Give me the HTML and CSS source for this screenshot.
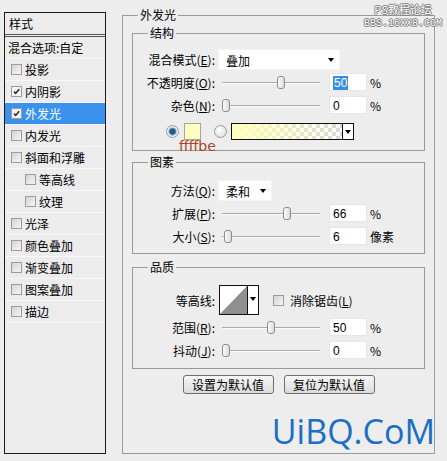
FILE: index.html
```html
<!DOCTYPE html>
<html lang="zh-CN">
<head>
    <meta charset="UTF-8">
    <meta name="viewport" content="width=device-width, initial-scale=1.0">
    <title>外发光</title>
    <link rel="stylesheet" href="styles.css">
</head>
<body>
    <div class="dialog">
        <div class="styles">
            <div class="styles-head">样式</div>
            <div class="style-item plain">混合选项:自定</div>
            <div class="style-item"><span class="cb"></span>投影</div>
            <div class="style-item"><span class="cb on"><svg viewBox="0 0 11 11"><path d="M2.5 5.5 L4.5 7.8 L8.8 2.8" /></svg></span>内阴影</div>
            <div class="style-item active"><span class="cb on"><svg viewBox="0 0 11 11"><path d="M2.5 5.5 L4.5 7.8 L8.8 2.8" /></svg></span>外发光</div>
            <div class="style-item"><span class="cb"></span>内发光</div>
            <div class="style-item"><span class="cb"></span>斜面和浮雕</div>
            <div class="style-item sub"><span class="cb"></span>等高线</div>
            <div class="style-item sub"><span class="cb"></span>纹理</div>
            <div class="style-item"><span class="cb"></span>光泽</div>
            <div class="style-item"><span class="cb"></span>颜色叠加</div>
            <div class="style-item"><span class="cb"></span>渐变叠加</div>
            <div class="style-item"><span class="cb"></span>图案叠加</div>
            <div class="style-item"><span class="cb"></span>描边</div>
        </div>

        <fieldset class="panel">
            <legend>外发光</legend>

            <fieldset class="group g-struct">
                <legend>结构</legend>
                <div class="row">
                    <label class="lbl">混合模式(<u>E</u>):</label>
                    <div class="select s-blend">叠加<span class="arrow"></span></div>
                </div>
                <div class="row slider-row first">
                    <label class="lbl">不透明度(<u>O</u>):</label>
                    <div class="track"><span class="thumb" style="--v: .61"></span></div>
                    <span class="num"><span class="sel">50</span></span>
                    <span class="unit">%</span>
                </div>
                <div class="row slider-row">
                    <label class="lbl">杂色(<u>N</u>):</label>
                    <div class="track"><span class="thumb" style="--v: 0"></span></div>
                    <span class="num">0</span>
                    <span class="unit">%</span>
                </div>
                <div class="row color-row">
                    <span class="radio on"></span>
                    <span class="swatch"><span class="hex">ffffbe</span></span>
                    <span class="radio"></span>
                    <span class="gradient"><span class="grad-fill"></span><span class="drop"><span class="arrow"></span></span></span>
                </div>
            </fieldset>

            <fieldset class="group g-elem">
                <legend>图素</legend>
                <div class="row">
                    <label class="lbl">方法(<u>Q</u>):</label>
                    <div class="select s-method">柔和<span class="arrow"></span></div>
                </div>
                <div class="row slider-row first">
                    <label class="lbl">扩展(<u>P</u>):</label>
                    <div class="track"><span class="thumb" style="--v: .68"></span></div>
                    <span class="num">66</span>
                    <span class="unit">%</span>
                </div>
                <div class="row slider-row">
                    <label class="lbl">大小(<u>S</u>):</label>
                    <div class="track"><span class="thumb" style="--v: .02"></span></div>
                    <span class="num">6</span>
                    <span class="unit">像素</span>
                </div>
            </fieldset>

            <fieldset class="group g-quality">
                <legend>品质</legend>
                <div class="row contour-row">
                    <label class="lbl">等高线:</label>
                    <div class="contour">
                        <svg class="curve" viewBox="0 0 29 28" preserveAspectRatio="none"><polygon points="0,28 29,0 29,28" /></svg>
                        <span class="drop"><span class="arrow"></span></span>
                    </div>
                    <span class="cb"></span>
                    <span class="check-text">消除锯齿(<u>L</u>)</span>
                </div>
                <div class="row slider-row first">
                    <label class="lbl">范围(<u>R</u>):</label>
                    <div class="track"><span class="thumb" style="--v: .5"></span></div>
                    <span class="num">50</span>
                    <span class="unit">%</span>
                </div>
                <div class="row slider-row">
                    <label class="lbl">抖动(<u>J</u>):</label>
                    <div class="track"><span class="thumb" style="--v: 0"></span></div>
                    <span class="num">0</span>
                    <span class="unit">%</span>
                </div>
            </fieldset>

            <div class="buttons">
                <button class="btn">设置为默认值</button>
                <button class="btn">复位为默认值</button>
            </div>

            <div class="mark">UiBQ.CoM</div>
        </fieldset>
    </div>

    <div class="site-mark">PS教程论坛<br><span class="site-url">BBS.16XX8.COM</span></div>
</body>
</html>
```

FILE: styles.css
```css
body {
    margin: 0;
    background: #ededed;
    font-family: "Noto Sans CJK SC", "Noto Sans", sans-serif;
    font-size: 12px;
    color: #000;
}
.dialog {
    display: flex;
    align-items: flex-start;
    padding: 0 4px;
}

/* left list of layer styles */
.styles {
    width: 102px;
    height: 442px;
    margin-top: 12px;
    box-sizing: border-box;
    border: 1px solid #1a1a1a;
    background: #ececec;
}
.styles-head {
    height: 21px;
    line-height: 21px;
    padding-left: 4px;
    border-bottom: 3px double #555;
}
.style-item {
    display: flex;
    align-items: center;
    height: 21px;
    padding-left: 6px;
    border-bottom: 1px solid #f8f8f8;
    white-space: nowrap;
}
.style-item.plain {
    padding-left: 3px;
}
.style-item.sub {
    padding-left: 20px;
}
.style-item.active {
    background: #3a92ec;
    color: #fff;
}
.cb {
    width: 11px;
    height: 11px;
    box-sizing: border-box;
    border: 1px solid #9c9c9c;
    background: linear-gradient(135deg, #d4d4d4, #f6f6f6);
    margin-right: 3px;
    flex: none;
}
.cb svg {
    display: block;
    width: 9px;
    height: 9px;
}
.cb svg path {
    fill: none;
    stroke: #222;
    stroke-width: 1.8;
}
.cb.on {
    background: #f4f4f4;
}

/* right side group boxes */
fieldset {
    margin: 0;
    border: 1px solid #9a9a9a;
    min-inline-size: 0;
}
legend {
    font-size: 12px;
    line-height: 16px;
    padding: 0 2px;
}
.panel {
    position: relative;
    width: 313px;
    height: 447px;
    box-sizing: border-box;
    margin: 7px 0 0 16px;
    padding: 2px 9px 0;
}
.panel > legend {
    margin-left: 6px;
}
.group {
    padding: 0;
}
.group > legend {
    margin-left: 15px;
}
.g-struct {
    padding: 8px 0 10px;
}
.g-elem {
    margin-top: 3px;
    padding: 10px 0 8px;
}
.g-quality {
    margin-top: 5px;
    padding: 10px 0 9px;
}

.row {
    display: flex;
    align-items: center;
    height: 21px;
}
.lbl {
    width: 82px;
    margin-right: 3px;
    text-align: right;
    white-space: nowrap;
}
.select {
    position: relative;
    height: 21px;
    line-height: 21px;
    box-sizing: border-box;
    padding-left: 7px;
    background: #fff;
    border: 1px solid #f4f4f4;
}
.s-blend {
    width: 122px;
}
.s-method {
    width: 54px;
}
.arrow {
    position: absolute;
    right: 5px;
    top: 8px;
    border-left: 3.5px solid transparent;
    border-right: 3.5px solid transparent;
    border-top: 4px solid #000;
}

.slider-row {
    height: 18px;
    margin-top: 5px;
}
.slider-row.first {
    margin-top: 3px;
}
.track {
    position: relative;
    width: 98px;
    height: 13px;
    margin-left: 4px;
}
.track::before {
    content: "";
    position: absolute;
    left: 0;
    right: 0;
    top: 6px;
    border-top: 1px solid #ababab;
    border-bottom: 1px solid #fbfbfb;
}
.thumb {
    position: absolute;
    top: 0;
    left: calc((100% - 8px) * var(--v));
    width: 8px;
    height: 13px;
    box-sizing: border-box;
    border: 1px solid #8d8d8d;
    border-radius: 3px;
    background: linear-gradient(90deg, #fbfbfb, #dcdcdc);
}
.num {
    width: 38px;
    height: 18px;
    line-height: 18px;
    box-sizing: border-box;
    margin-left: 9px;
    padding-left: 3px;
    background: #fff;
    border: 1px solid #e2e5ea;
    font-family: "Liberation Sans", Arial, sans-serif;
}
.sel {
    background: #3b8de4;
    color: #fff;
    padding: 0 1px;
}
.unit {
    margin-left: 3px;
}

/* color choice row */
.color-row {
    height: 17px;
    margin-top: 9px;
}
.radio {
    width: 13px;
    height: 13px;
    box-sizing: border-box;
    border-radius: 50%;
    border: 1px solid #9a9a9a;
    background: radial-gradient(circle at 40% 35%, #fff, #d6d6d6);
    margin-left: 33px;
}
.radio.on {
    background: radial-gradient(circle, #1d5d86 0 2.5px, #6ea2c6 3.5px, #e8eef3 4.5px);
}
.radio + .swatch {
    margin-left: 5px;
}
.swatch + .radio {
    margin-left: 13px;
}
.swatch {
    position: relative;
    width: 17px;
    height: 17px;
    box-sizing: border-box;
    background: #ffffbe;
    border: 1px solid #a5a5a5;
}
.hex {
    position: absolute;
    left: -6px;
    top: 14px;
    font-family: "DejaVu Sans", Verdana, sans-serif;
    font-size: 14px;
    line-height: 16px;
    color: #a94424;
}
.gradient {
    display: flex;
    width: 123px;
    height: 17px;
    margin-left: 4px;
    box-sizing: border-box;
    border: 1px solid #111;
    background-color: #fff;
    background-image:
        linear-gradient(45deg, #d8d8d8 25%, transparent 25%, transparent 75%, #d8d8d8 75%),
        linear-gradient(45deg, #d8d8d8 25%, transparent 25%, transparent 75%, #d8d8d8 75%);
    background-size: 8px 8px;
    background-position: 0 0, 4px 4px;
}
.grad-fill {
    flex: 1;
    background: linear-gradient(90deg, #ffffbe, rgba(255, 255, 190, 0));
}
.drop {
    position: relative;
    width: 10px;
    background: #fff;
    border-left: 1px solid #111;
}
.drop .arrow {
    right: 2px;
    top: 6px;
}

/* quality */
.contour-row {
    height: 30px;
}
.contour {
    display: flex;
    width: 40px;
    height: 30px;
    margin-left: 1px;
    box-sizing: border-box;
    border: 1px solid #111;
    background: #fff;
}
.curve {
    flex: 1;
    height: 28px;
}
.curve polygon {
    fill: #8f8f8f;
}
.contour .drop .arrow {
    top: 11px;
}
.contour-row .cb {
    margin-left: 14px;
    margin-right: 6px;
}

.buttons {
    display: flex;
    justify-content: center;
    gap: 10px;
    margin-top: 6px;
}
.btn {
    width: 91px;
    height: 19px;
    padding: 0;
    font: inherit;
    line-height: 16px;
    border: 1px solid #6e6e6e;
    border-radius: 3px;
    background: linear-gradient(#f7f7f7, #dcdcdc);
    color: #000;
}

/* watermarks */
.mark {
    position: absolute;
    right: -1px;
    bottom: 2px;
    font-family: "Open Sans", "Noto Sans", sans-serif;
    font-size: 34px;
    line-height: 40px;
    color: #1b6ec4;
}
.site-mark {
    position: absolute;
    top: 3px;
    left: 362px;
    width: 82px;
    text-align: center;
    font-size: 11px;
    line-height: 12px;
    color: #fff;
    text-shadow: 1px 0 #7a7a7a, -1px 0 #7a7a7a, 0 1px #7a7a7a, 0 -1px #7a7a7a;
}
.site-url {
    font-family: "Liberation Mono", monospace;
    font-size: 10px;
}
```
